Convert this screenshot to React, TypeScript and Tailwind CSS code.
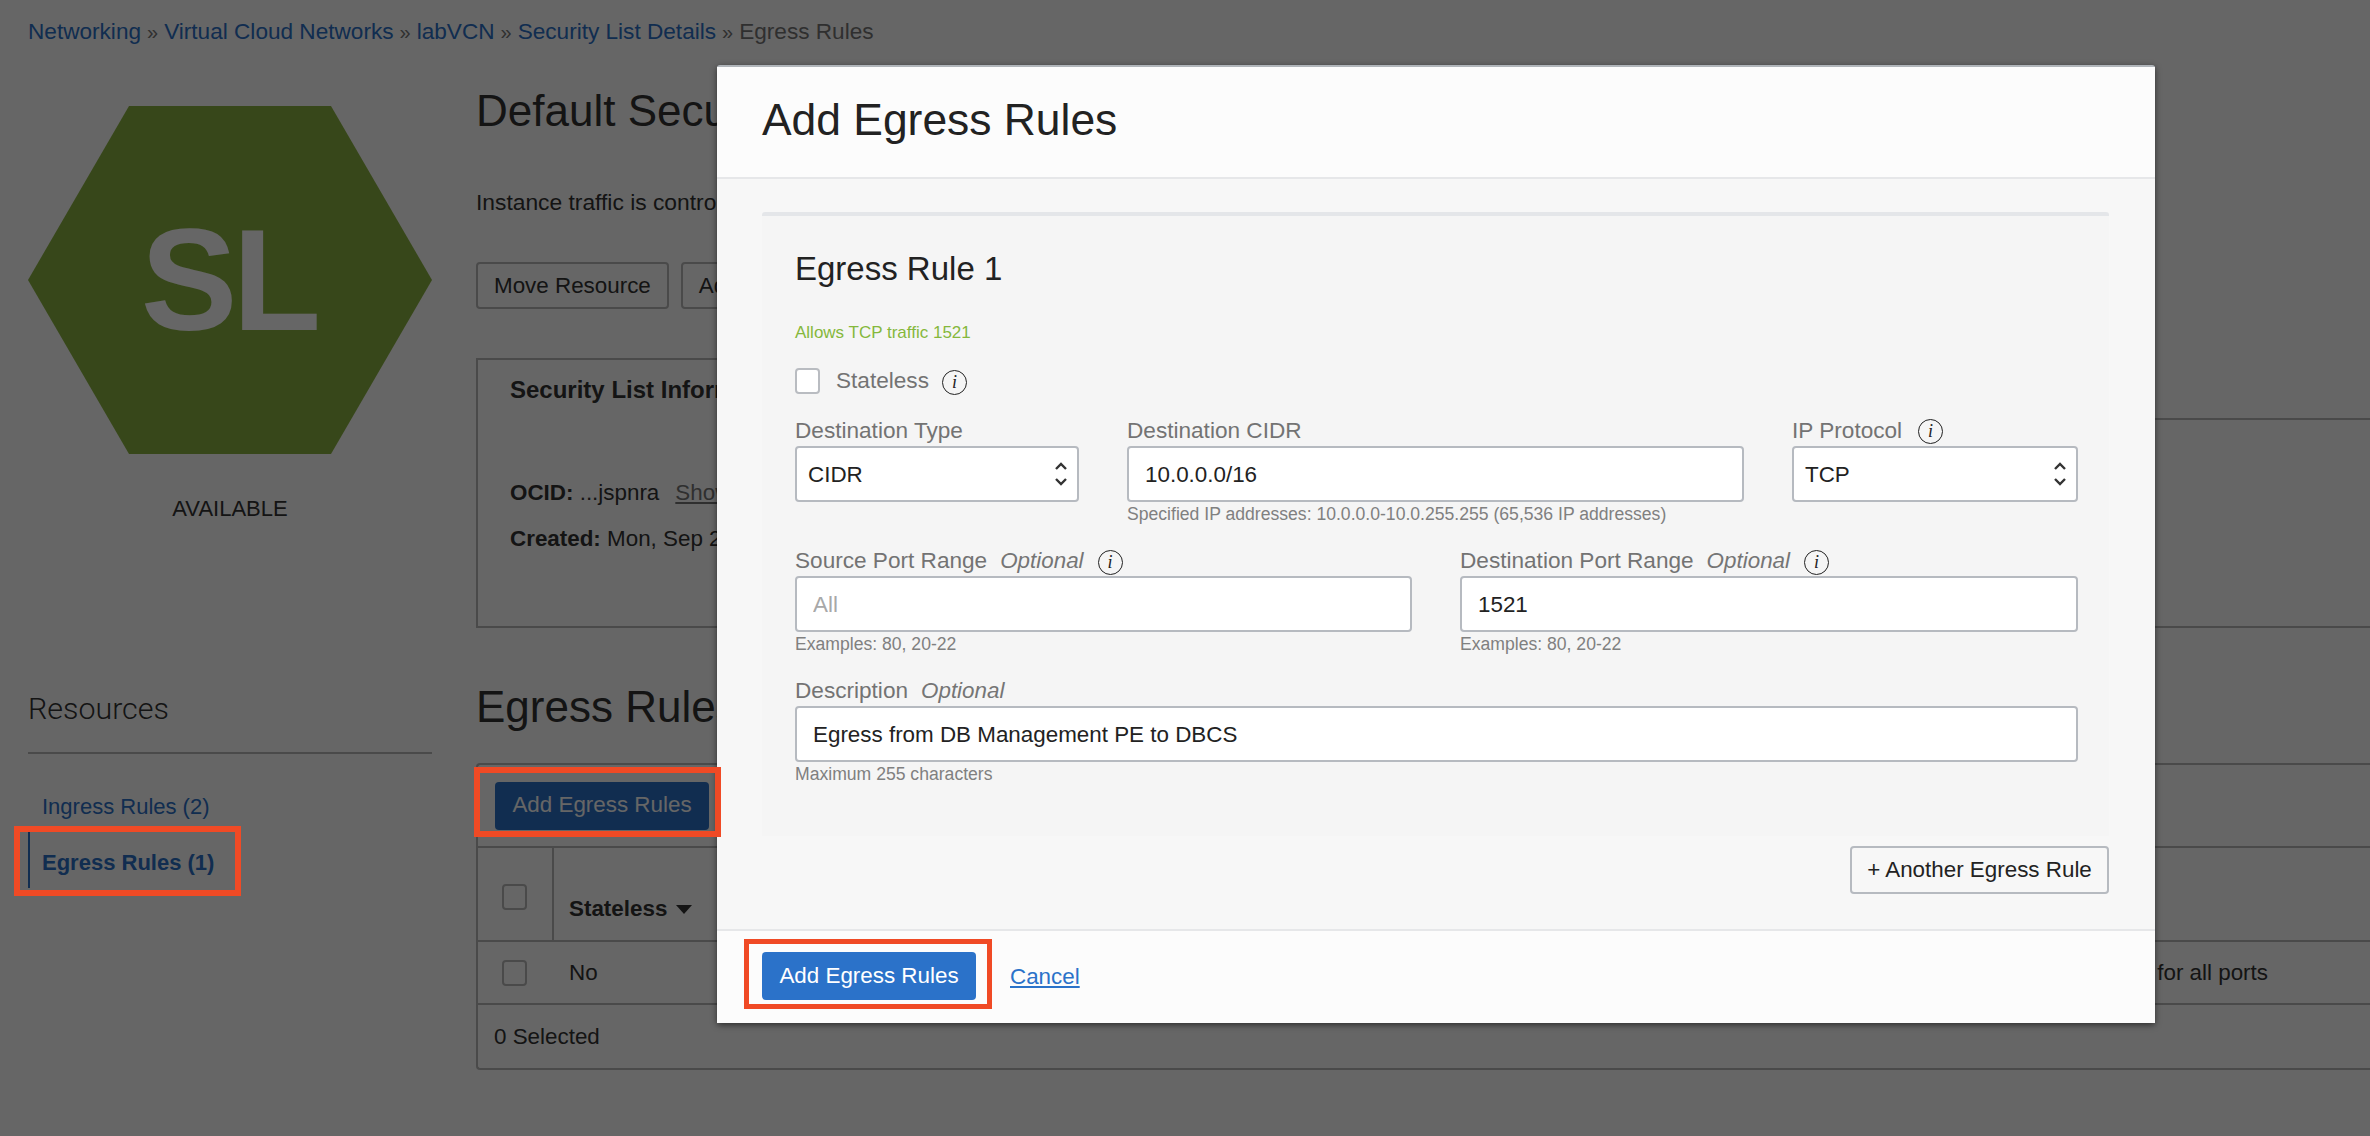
import type { ReactNode } from 'react'

// small circled italic "i" used beside form labels
function InfoIcon() {
  return (
    <span className="inline-flex h-[25px] w-[25px] shrink-0 items-center justify-center rounded-full border-[1.5px] border-[#222] font-['Liberation_Serif',serif] text-[18px] italic leading-none text-[#222]">
      i
    </span>
  )
}

function Chevrons() {
  return (
    <svg width="14" height="26" viewBox="0 0 14 26" fill="none" stroke="#333" strokeWidth="2.4" className="shrink-0">
      <path d="M2 8 L7 3 L12 8" />
      <path d="M2 18 L7 23 L12 18" />
    </svg>
  )
}

function Label({ children }: { children: ReactNode }) {
  return <div className="flex h-[30px] items-center text-[22.6px] text-[#737373]">{children}</div>
}

function Optional() {
  return <span className="ml-[13px] text-[22.4px] italic text-[#757575]">Optional</span>
}

function Help({ children }: { children: ReactNode }) {
  return <div className="flex h-6 items-center text-[17.6px] text-[#808080]">{children}</div>
}

function TextInput({ value, placeholder }: { value?: string; placeholder?: string }) {
  return (
    <input
      readOnly
      value={value}
      placeholder={placeholder}
      className="block h-[56px] w-full rounded-[4px] border-2 border-[#b6bac0] bg-white px-[16px] pt-[2px] text-[22.4px] text-[#222] outline-none placeholder:text-[#a8a8a8]"
    />
  )
}

function SelectBox({ value }: { value: string }) {
  return (
    <div className="flex h-[56px] items-center justify-between rounded-[4px] border-2 border-[#b6bac0] bg-white pl-[11px] pr-[9px] text-[22.4px] text-[#222]">
      <span className="pt-[2px]">{value}</span>
      <Chevrons />
    </div>
  )
}

function PageCheckBox() {
  return <div className="h-[26px] w-[25px] rounded-[4px] border-2 border-[#b9b9b9]" />
}

function PageBehind() {
  return (
    <div className="bg-white text-[22.4px] text-[#333]">
      <div className="flex h-[64px] items-center gap-[6px] pl-[28px] text-[22.6px] text-[#2b70c8]">
        <span>Networking</span>
        <span className="text-[20px] text-[#777]">»</span>
        <span>Virtual Cloud Networks</span>
        <span className="text-[20px] text-[#777]">»</span>
        <span>labVCN</span>
        <span className="text-[20px] text-[#777]">»</span>
        <span>Security List Details</span>
        <span className="text-[20px] text-[#777]">»</span>
        <span className="text-[#777]">Egress Rules</span>
      </div>

      <div className="flex pl-[28px]">
        {/* left column */}
        <div className="w-[404px] shrink-0">
          <div className="mt-[42px] flex h-[348px] items-center justify-center bg-[#8ab241] [clip-path:polygon(25%_0,75%_0,100%_50%,75%_100%,25%_100%,0_50%)]">
            <span className="-ml-[3px] text-[145px] font-bold leading-none tracking-[-5px] text-white">SL</span>
          </div>
          <div className="mt-[42px] flex h-6 items-center justify-center text-[22px]">AVAILABLE</div>

          <div className="mt-[169px] border-b-2 border-[#b9b9b9] pb-[23px]">
            <div className="flex h-10 items-center font-['Roboto',sans-serif] text-[30.4px] font-light">Resources</div>
          </div>
          <div className="mt-[37px] flex h-[30px] items-center pl-[14px] text-[22px] text-[#2b70c8]">Ingress Rules (2)</div>
          <div className="mt-[11px] flex h-[56px] items-center border-l-2 border-[#2b70c8] pl-[12px] pt-[5px] text-[22px] font-bold text-[#2b70c8]">
            Egress Rules (1)
          </div>
        </div>

        {/* main column */}
        <div className="ml-[44px] min-w-0 flex-1">
          <div className="mt-[19px] flex h-[56px] items-center text-[44px]">Default Security List for labVCN</div>
          <div className="mt-[48px] flex h-[30px] items-center text-[22.8px]">Instance traffic is controlled by firewall rules</div>

          <div className="mt-[45px] flex h-[47px] gap-[12px]">
            <div className="flex items-center rounded-[4px] border-2 border-[#b9b9b9] px-[16px]">Move Resource</div>
            <div className="flex items-center rounded-[4px] border-2 border-[#b9b9b9] px-[16px]">Add Tags</div>
          </div>

          <div className="mt-[49px] h-[270px] border-b-2 border-l-2 border-[#b9b9b9]">
            <div className="flex h-[62px]">
              <div className="flex w-[560px] items-center border-r-2 border-t-2 border-[#b9b9b9] pl-[32px] text-[24px] font-bold">
                Security List Information
              </div>
              <div className="flex-1 border-b-2 border-[#b9b9b9]" />
            </div>
            <div className="mt-[58px] flex h-[30px] items-center pl-[32px]">
              <b>OCID:</b>&nbsp;...jspnra<span className="ml-[16px] text-[#777] underline">Show</span>
            </div>
            <div className="mt-[16px] flex h-[30px] items-center pl-[32px]">
              <b>Created:</b>&nbsp;Mon, Sep 20, 2021
            </div>
          </div>

          <div className="mt-[51px] flex h-[56px] items-center text-[44px]">Egress Rules</div>

          <div className="mt-[28px] rounded-l-[4px] border-b-2 border-l-2 border-t-2 border-[#b9b9b9]">
            <div className="flex h-[81px] items-center pl-[17px]">
              <div className="flex h-[48px] w-[214px] items-center justify-center rounded-[4px] bg-[#2b70c8] pb-[2px] text-white">
                Add Egress Rules
              </div>
            </div>
            <div className="flex h-[94px] border-t-2 border-[#b9b9b9]">
              <div className="flex w-[76px] shrink-0 justify-center border-r-2 border-[#b9b9b9] pr-[1px] pt-[36px]">
                <PageCheckBox />
              </div>
              <div className="flex items-center gap-[9px] pl-[15px] pt-[30px] font-bold">
                Stateless
                <svg width="16" height="9" viewBox="0 0 16 9" fill="#333">
                  <path d="M0 0 H16 L8 9 Z" />
                </svg>
              </div>
            </div>
            <div className="flex h-[63px] items-center border-t-2 border-[#b9b9b9]">
              <div className="flex w-[76px] shrink-0 justify-center pr-[3px]">
                <PageCheckBox />
              </div>
              <span className="pl-[15px]">No</span>
              <span className="ml-auto pr-[102px]">All traffic for all ports</span>
            </div>
            <div className="flex h-[65px] items-center border-t-2 border-[#b9b9b9] pl-[16px]">0 Selected</div>
          </div>
        </div>
      </div>
    </div>
  )
}

function EgressModal() {
  return (
    <div className="absolute left-[717px] top-[65px] w-[1438px] rounded-[3px] border-t-2 border-[#b0b5ba] bg-[#f7f7f7] text-[22.4px] text-[#222] shadow-[0_2px_6px_rgba(0,0,0,0.55)]">
      <div className="flex h-[112px] items-center border-b-2 border-[#e6e7e9] bg-[#fcfcfc] pb-[3px] pl-[45px] text-[44.4px]">Add Egress Rules</div>

      <div className="pb-[35px] pl-[45px] pr-[46px] pt-[33px]">
        <div className="rounded-t-[3px] border-t-4 border-[#e4e6e9] bg-[#f5f5f5] pb-[50px] pl-[33px] pr-[31px] pt-[33px]">
          <div className="flex h-10 items-center text-[33px]">Egress Rule 1</div>
          <div className="mt-[32px] flex h-6 items-center text-[17px] text-[#85b83c]">Allows TCP traffic 1521</div>

          <div className="mt-[23px] flex h-[26px] items-center">
            <div className="h-[26px] w-[25px] rounded-[4px] border-2 border-[#b9bcc1] bg-white" />
            <span className="ml-[16px] text-[22.6px] text-[#737373]">Stateless</span>
            <span className="ml-[13px]">
              <InfoIcon />
            </span>
          </div>

          <div className="mt-[22px] grid grid-cols-[284px_1fr_286px] gap-x-[48px]">
            <div>
              <Label>Destination Type</Label>
              <SelectBox value="CIDR" />
            </div>
            <div>
              <Label>Destination CIDR</Label>
              <TextInput value="10.0.0.0/16" />
              <Help>Specified IP addresses: 10.0.0.0-10.0.255.255 (65,536 IP addresses)</Help>
            </div>
            <div>
              <Label>
                IP Protocol
                <span className="ml-[16px] -mt-[2px]">
                  <InfoIcon />
                </span>
              </Label>
              <SelectBox value="TCP" />
            </div>
          </div>

          <div className="mt-[20px] grid grid-cols-[617px_1fr] gap-x-[48px]">
            <div>
              <Label>
                Source Port Range
                <Optional />
                <span className="ml-[14px]">
                  <InfoIcon />
                </span>
              </Label>
              <TextInput placeholder="All" />
              <Help>Examples: 80, 20-22</Help>
            </div>
            <div>
              <Label>
                Destination Port Range
                <Optional />
                <span className="ml-[14px]">
                  <InfoIcon />
                </span>
              </Label>
              <TextInput value="1521" />
              <Help>Examples: 80, 20-22</Help>
            </div>
          </div>

          <div className="mt-[20px]">
            <Label>
              Description
              <Optional />
            </Label>
            <TextInput value="Egress from DB Management PE to DBCS" />
            <Help>Maximum 255 characters</Help>
          </div>
        </div>

        <div className="mt-[10px] flex justify-end">
          <div className="flex h-[48px] w-[259px] items-center justify-center rounded-[4px] border-2 border-[#b6bac0]">
            + Another Egress Rule
          </div>
        </div>
      </div>

      <div className="flex h-[94px] items-start border-t-2 border-[#e6e7e9] bg-[#fcfcfc] pl-[45px] pt-[21px]">
        <div className="flex h-[48px] w-[214px] items-center justify-center rounded-[4px] bg-[#2b72c9] text-white">
          Add Egress Rules
        </div>
        <a className="ml-[34px] mt-[8px] text-[#2b72c9] underline">Cancel</a>
      </div>
    </div>
  )
}

export default function App() {
  return (
    <div className="relative h-[1136px] w-[2370px] overflow-hidden bg-white font-['Liberation_Sans',Arial,sans-serif]">
      <PageBehind />
      {/* dim layer over the page */}
      <div className="absolute inset-0 bg-black/60" />
      <EgressModal />
      {/* annotation boxes drawn on top of the screenshot */}
      <div className="absolute left-[14px] top-[826px] h-[70px] w-[227px] border-[6px] border-[#f04a25]" />
      <div className="absolute left-[474px] top-[767px] h-[70px] w-[247px] border-[6px] border-[#f04a25]" />
      <div className="absolute left-[744px] top-[939px] h-[70px] w-[248px] border-[5px] border-[#f04a25]" />
    </div>
  )
}
